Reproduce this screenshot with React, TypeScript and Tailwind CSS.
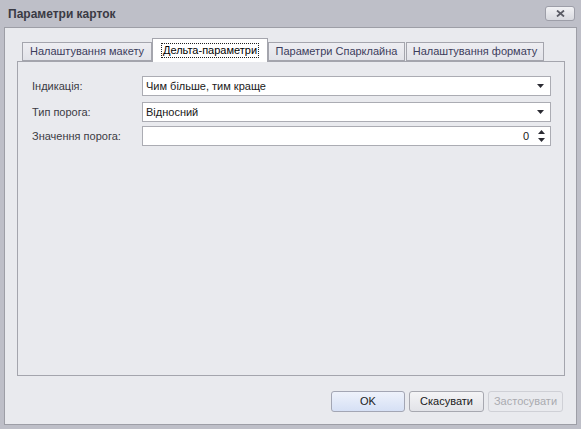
import React from 'react';

const font = { fontFamily: '"Liberation Sans", Arial, sans-serif' };

const tabs = [
  { label: 'Налаштування макету', width: 'w-[130px]' },
  { label: 'Дельта-параметри', width: 'w-[116px]', active: true },
  { label: 'Параметри Спарклайна', width: 'w-[137px]' },
  { label: 'Налаштування формату', width: 'w-[138px] ml-[1px]' },
];

const Arrow: React.FC = () => (
  <svg width="7" height="4" viewBox="0 0 7 4" className="text-[#2b2b33]">
    <path d="M0 0h7L3.5 4z" fill="currentColor" />
  </svg>
);

const ComboBox: React.FC<{ value: string }> = ({ value }) => (
  <div className="flex h-[20px] w-[409px] items-center border border-[#abacb3] bg-white pl-[3px] pr-[6px]">
    <span className="flex-1 text-[11px] text-[#202020]">{value}</span>
    <Arrow />
  </div>
);

const SpinEdit: React.FC<{ value: number }> = ({ value }) => (
  <div className="flex h-[20px] w-[409px] items-center border border-[#abacb3] bg-white pr-[5px]">
    <span className="flex-1 pr-[9px] text-right text-[11px] text-[#202020]">{value}</span>
    <div className="flex flex-col gap-[4px]">
      <svg width="7" height="4" viewBox="0 0 7 4" className="text-[#2b2b33]">
        <path d="M0 4h7L3.5 0z" fill="currentColor" />
      </svg>
      <Arrow />
    </div>
  </div>
);

const Row: React.FC<{ label: string; children: React.ReactNode }> = ({ label, children }) => (
  <div className="flex items-center">
    <span className="w-[110px] text-[11px] text-[#3b3b44]">{label}</span>
    {children}
  </div>
);

const Button: React.FC<{ label: string; primary?: boolean; disabled?: boolean; width: string }> = ({
  label,
  primary,
  disabled,
  width,
}) => (
  <div
    className={`flex h-[21px] ${width} items-center justify-center rounded-[3px] border text-[11px] ${
      primary
        ? 'border-[#a3a6b4] bg-gradient-to-b from-[#eef2fb] to-[#d6e0f5] text-[#202020]'
        : disabled
          ? 'border-[#cfd0d6] bg-[#e9eaee] text-[#a9aab0]'
          : 'border-[#a7a8b0] bg-gradient-to-b from-[#f4f4f6] to-[#e2e3e8] text-[#202020]'
    }`}
  >
    {label}
  </div>
);

export default function App() {
  return (
    <div className="flex h-[429px] w-[581px] flex-col bg-[#bebfc8] px-[4px] pb-[4px]" style={font}>
      {/* title bar */}
      <div className="flex h-[27px] items-center justify-between pl-[4px] pr-[2px]">
        <span className="text-[12px] font-bold text-[#3a3a44]">Параметри карток</span>
        <div className="flex h-[15px] w-[30px] items-center justify-center rounded-[3px] border border-[#9d9ea8] bg-gradient-to-b from-[#f2f2f5] to-[#d8d9df]">
          <svg width="9" height="7" viewBox="0 0 9 7">
            <path d="M1 0.5l7 6M8 0.5l-7 6" stroke="#5b5c66" strokeWidth="1.8" />
          </svg>
        </div>
      </div>

      {/* client area */}
      <div className="flex flex-1 flex-col border border-[#9d9ea6] bg-[#e9eaee] pl-[12px] pr-[12px] pt-[10px]">
        <div className="flex items-end pl-[5px]">
          {tabs.map((t) =>
            t.active ? (
              <div
                key={t.label}
                className={`relative z-10 -mb-px flex h-[24px] ${t.width} items-center justify-center border border-b-0 border-[#a4a5ad] bg-white`}
              >
                <span className="border border-dotted border-[#202020] px-[1px] leading-[13px] text-[11px] text-black">
                  {t.label}
                </span>
              </div>
            ) : (
              <div
                key={t.label}
                className={`flex h-[19px] ${t.width} items-center justify-center border border-[#a4a5ad] bg-gradient-to-b from-[#eeeef2] to-[#e2e3e9] text-[11px] text-[#3c3d5c]`}
              >
                {t.label}
              </div>
            ),
          )}
        </div>

        <div className="flex h-[315px] w-[548px] flex-col gap-[6px] border border-[#a4a5ad] bg-[#e9eaee] pl-[14px] pt-[14px]">
          <Row label="Індикація:">
            <ComboBox value="Чим більше, тим краще" />
          </Row>
          <Row label="Тип порога:">
            <ComboBox value="Відносний" />
          </Row>
          <div className="-mt-[2px]">
            <Row label="Значення порога:">
              <SpinEdit value={0} />
            </Row>
          </div>
        </div>

        <div className="mt-[15px] flex justify-end gap-[4px] pr-[1px]">
          <Button label="OK" primary width="w-[74px]" />
          <Button label="Скасувати" width="w-[75px]" />
          <Button label="Застосувати" disabled width="w-[75px]" />
        </div>
      </div>
    </div>
  );
}
